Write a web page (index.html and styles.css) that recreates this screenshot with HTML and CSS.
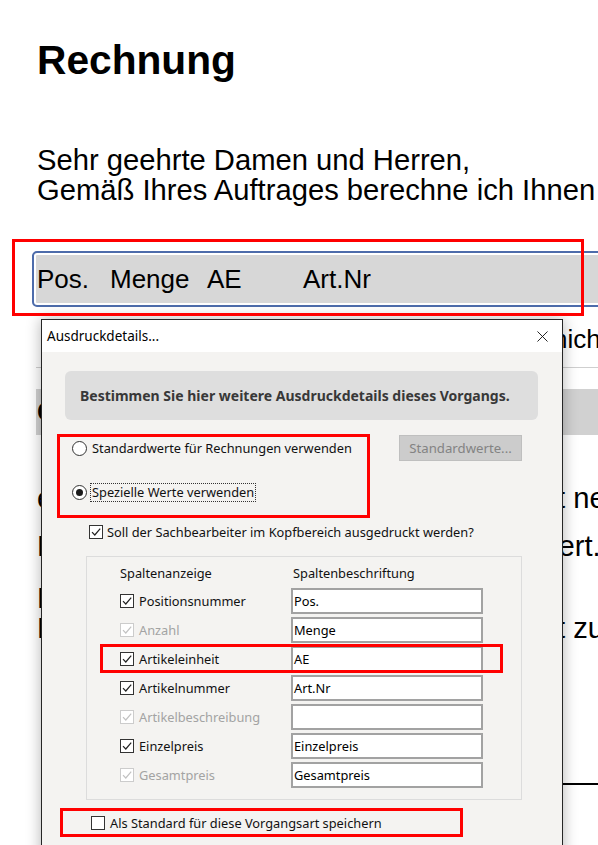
FILE: index.html
```html
<!DOCTYPE html>
<html lang="de">
<head>
    <meta charset="UTF-8">
    <meta name="viewport" content="width=device-width, initial-scale=1.0">
    <title>Rechnung - Ausdruckdetails</title>
    <link rel="stylesheet" href="styles.css">
</head>
<body>
    <div class="page">
        <!-- Druckvorschau der Rechnung im Hintergrund -->
        <div class="doc">
            <h1 class="doc-title">Rechnung</h1>
            <p class="doc-text">Sehr geehrte Damen und Herren,<br>Gemäß Ihres Auftrages berechne ich Ihnen</p>

            <div class="head-bar">
                <span class="col-pos">Pos.</span>
                <span class="col-qty">Menge</span>
                <span class="col-unit">AE</span>
                <span class="col-art">Art.Nr</span>
            </div>

            <div class="doc-line line-item">
                <span class="line-lead"></span>
                <span class="line-tail">nich</span>
            </div>

            <div class="sum-bar">Gesamtbetrag</div>

            <div class="doc-line line-a">
                <span class="line-lead">ersichtlich sind alle Positionen mit Menge und Preis</span>
                <span class="line-tail">t ne</span>
            </div>
            <div class="doc-line line-b">
                <span class="line-lead">Bitte beachten Sie, dass der Betrag bereits reduz</span>
                <span class="line-tail tail-shift">iert.</span>
            </div>
            <div class="doc-line line-c">
                <span class="line-lead">Nach Erhalt der Ware bitten wir Sie, den Betrag</span>
                <span class="line-tail"></span>
            </div>
            <div class="doc-line">
                <span class="line-lead">Hinweis: Skonto ist bei dieser Rechnung nicht</span>
                <span class="line-tail">t zu</span>
            </div>

            <div class="doc-rule"></div>
        </div>

        <!-- Dialog "Ausdruckdetails" -->
        <div class="dialog">
            <div class="dialog-title">
                <span>Ausdruckdetails...</span>
                <svg class="close-icon" width="12" height="12" viewBox="0 0 12 12">
                    <path d="M0.5 0.5 L11.5 11.5 M11.5 0.5 L0.5 11.5" stroke="#111" stroke-width="1" fill="none"/>
                </svg>
            </div>

            <div class="dialog-body">
                <div class="info-panel">Bestimmen Sie hier weitere Ausdruckdetails dieses Vorgangs.</div>

                <div class="option-row option-first">
                    <span class="radio"></span>
                    <span class="option-label">Standardwerte für Rechnungen verwenden</span>
                    <button class="btn-default" disabled>Standardwerte...</button>
                </div>

                <div class="option-row option-second">
                    <span class="radio radio-on"></span>
                    <span class="option-label has-focus">Spezielle Werte verwenden</span>
                </div>

                <div class="option-row option-clerk">
                    <span class="check is-on">
                        <svg width="12" height="12" viewBox="0 0 12 12"><path d="M2 6.2 L4.8 9 L10.2 2.6" /></svg>
                    </span>
                    <span class="check-label">Soll der Sachbearbeiter im Kopfbereich ausgedruckt werden?</span>
                </div>

                <div class="column-group">
                    <div class="column-grid">
                        <div class="grid-head">Spaltenanzeige</div>
                        <div class="grid-head head-caption">Spaltenbeschriftung</div>

                        <label class="col-toggle">
                            <span class="check is-on"><svg width="12" height="12" viewBox="0 0 12 12"><path d="M2 6.2 L4.8 9 L10.2 2.6" /></svg></span>
                            <span class="check-label">Positionsnummer</span>
                        </label>
                        <div class="caption-field">Pos.</div>

                        <label class="col-toggle is-disabled">
                            <span class="check is-on"><svg width="12" height="12" viewBox="0 0 12 12"><path d="M2 6.2 L4.8 9 L10.2 2.6" /></svg></span>
                            <span class="check-label">Anzahl</span>
                        </label>
                        <div class="caption-field">Menge</div>

                        <label class="col-toggle">
                            <span class="check is-on"><svg width="12" height="12" viewBox="0 0 12 12"><path d="M2 6.2 L4.8 9 L10.2 2.6" /></svg></span>
                            <span class="check-label">Artikeleinheit</span>
                        </label>
                        <div class="caption-field">AE</div>

                        <label class="col-toggle">
                            <span class="check is-on"><svg width="12" height="12" viewBox="0 0 12 12"><path d="M2 6.2 L4.8 9 L10.2 2.6" /></svg></span>
                            <span class="check-label">Artikelnummer</span>
                        </label>
                        <div class="caption-field">Art.Nr</div>

                        <label class="col-toggle is-disabled">
                            <span class="check is-on"><svg width="12" height="12" viewBox="0 0 12 12"><path d="M2 6.2 L4.8 9 L10.2 2.6" /></svg></span>
                            <span class="check-label">Artikelbeschreibung</span>
                        </label>
                        <div class="caption-field"></div>

                        <label class="col-toggle">
                            <span class="check is-on"><svg width="12" height="12" viewBox="0 0 12 12"><path d="M2 6.2 L4.8 9 L10.2 2.6" /></svg></span>
                            <span class="check-label">Einzelpreis</span>
                        </label>
                        <div class="caption-field">Einzelpreis</div>

                        <label class="col-toggle is-disabled">
                            <span class="check is-on"><svg width="12" height="12" viewBox="0 0 12 12"><path d="M2 6.2 L4.8 9 L10.2 2.6" /></svg></span>
                            <span class="check-label">Gesamtpreis</span>
                        </label>
                        <div class="caption-field">Gesamtpreis</div>
                    </div>
                </div>

                <div class="option-row option-save">
                    <span class="check"></span>
                    <span class="check-label">Als Standard für diese Vorgangsart speichern</span>
                </div>
            </div>
        </div>

        <!-- rote Markierungen -->
        <div class="mark mark-head"></div>
        <div class="mark mark-options"></div>
        <div class="mark mark-unit"></div>
        <div class="mark mark-save"></div>
    </div>
</body>
</html>
```

FILE: styles.css
```css
* {
    margin: 0;
    padding: 0;
    box-sizing: border-box;
}

html, body {
    width: 598px;
    height: 845px;
    overflow: hidden;
    background: #fff;
}

.page {
    position: relative;
    width: 598px;
    height: 845px;
    overflow: hidden;
}

/* ---------- Dokument ---------- */

.doc {
    width: 700px;
    padding-left: 37px;
    font-family: "Liberation Sans", Arial, sans-serif;
    color: #000;
}

.doc-title {
    margin-top: 36px;
    font-size: 40.7px;
    line-height: 48px;
    font-weight: 700;
}

.doc-text {
    margin-top: 61px;
    font-size: 29.2px;
    line-height: 30px;
    white-space: nowrap;
}

.head-bar {
    display: flex;
    align-items: center;
    margin-top: 46px;
    margin-left: -5px;
    height: 56px;
    padding-left: 3px;
    background: #d7d7d7;
    border: 2px solid #4d6cab;
    border-radius: 5px;
    box-shadow: inset 0 0 0 2px #fff;
    font-size: 26px;
    white-space: nowrap;
}

.col-pos { width: 73px; }
.col-qty { width: 97px; }
.col-unit { width: 96px; }

.doc-line {
    display: grid;
    grid-template-columns: 520px auto;
    font-size: 29.2px;
    line-height: 30px;
    white-space: nowrap;
}

.line-lead {
    overflow: hidden;
}

.tail-shift {
    margin-left: -5px;
}

.line-item {
    grid-template-columns: 516px auto;
    margin-top: 17px;
    margin-left: -1px;
    padding-left: 1px;
    padding-bottom: 13px;
    border-bottom: 1px solid #cfcfcf;
    font-size: 26px;
}

.sum-bar {
    margin-top: 21px;
    margin-left: -1px;
    height: 46px;
    padding-left: 1px;
    background: #d1d1d1;
    font-size: 27px;
    font-weight: 700;
    line-height: 46px;
}

.line-a { margin-top: 48px; }
.line-b { margin-top: 18px; }
.line-c { margin-top: 22px; }

.doc-rule {
    margin-top: 140px;
    margin-left: 440px;
    border-top: 2px solid #000;
}

/* ---------- Dialog ---------- */

.dialog {
    position: absolute;
    left: 41px;
    top: 319px;
    width: 522px;
    height: 560px;
    background: #f4f3f1;
    border: 1px solid #262626;
    box-shadow: 0 0 14px rgba(0, 0, 0, 0.3);
    font-family: "Noto Sans", "Segoe UI", sans-serif;
    font-size: 12.8px;
    color: #111;
}

.dialog-title {
    display: flex;
    align-items: center;
    justify-content: space-between;
    height: 32px;
    padding: 0 14px 0 5px;
    background: #fff;
    font-size: 13.5px;
    color: #000;
}

.close-icon {
    display: block;
    width: 11px;
    height: 11px;
}

.dialog-body {
    padding: 19px 24px 0 23px;
}

.info-panel {
    display: flex;
    align-items: center;
    height: 49px;
    padding-left: 15px;
    background: #dedede;
    border-radius: 6px;
    font-size: 14px;
    font-weight: 700;
    color: #383838;
}

.option-row {
    display: flex;
    align-items: center;
    height: 20px;
    white-space: nowrap;
}

.option-first {
    margin-top: 15px;
    height: 26px;
    padding-left: 7px;
}

.option-second {
    margin-top: 21px;
    padding-left: 7px;
}

.option-clerk {
    margin-top: 20px;
    padding-left: 24px;
}

.option-save {
    margin-top: 13px;
    padding-left: 26px;
}

.option-save .check-label {
    margin-left: 5px;
}

.radio {
    position: relative;
    width: 15px;
    height: 15px;
    flex: none;
    border: 1px solid #333;
    border-radius: 50%;
    background: #fff;
}

.radio-on::after {
    content: "";
    position: absolute;
    left: 3px;
    top: 3px;
    width: 7px;
    height: 7px;
    border-radius: 50%;
    background: #1a1a1a;
}

.option-label {
    margin-left: 3px;
    padding: 0 1px;
    border: 1px solid transparent;
    line-height: 17px;
}

.option-label.has-focus {
    border: 1px dotted #333;
}

.btn-default {
    width: 123px;
    height: 26px;
    margin-left: auto;
    margin-right: 16px;
    background: #cccccc;
    border: 1px solid #bfbfbf;
    font: inherit;
    font-size: 13.2px;
    color: #838383;
}

.check {
    display: flex;
    align-items: center;
    justify-content: center;
    width: 14px;
    height: 14px;
    flex: none;
    border: 1px solid #333;
    background: #fff;
}

.check svg path {
    fill: none;
    stroke: #222;
    stroke-width: 1.2;
}

.check-label {
    margin-left: 4px;
}

.column-group {
    margin-top: 14px;
    margin-left: 21px;
    width: 436px;
    padding: 6px 0 11px 33px;
    border: 1px solid #dcdcdc;
}

.column-grid {
    display: grid;
    grid-template-columns: 171px 192px;
    grid-template-rows: 22px;
    grid-auto-rows: 26px;
    row-gap: 3px;
}

.grid-head {
    display: flex;
    align-items: center;
    align-self: start;
    height: 20px;
}

.head-caption {
    padding-left: 2px;
}

.col-toggle {
    display: flex;
    align-items: center;
    white-space: nowrap;
}

.col-toggle .check-label {
    margin-left: 5px;
}

.col-toggle.is-disabled .check {
    border-color: #cccccc;
}

.col-toggle.is-disabled .check svg path {
    stroke: #c2c2c2;
}

.col-toggle.is-disabled .check-label {
    color: #a3a3a3;
}

.caption-field {
    display: flex;
    align-items: center;
    padding-left: 1px;
    background: #fff;
    border: 2px solid #a2a2a2;
    color: #000;
}

/* ---------- Markierungen ---------- */

.mark {
    position: absolute;
    border: 3px solid #ff0000;
}

.mark-head {
    left: 12px;
    top: 239px;
    width: 572px;
    height: 77px;
}

.mark-options {
    left: 57px;
    top: 434px;
    width: 313px;
    height: 84px;
}

.mark-unit {
    left: 100px;
    top: 644px;
    width: 403px;
    height: 29px;
}

.mark-save {
    left: 60px;
    top: 808px;
    width: 403px;
    height: 29px;
}
```
